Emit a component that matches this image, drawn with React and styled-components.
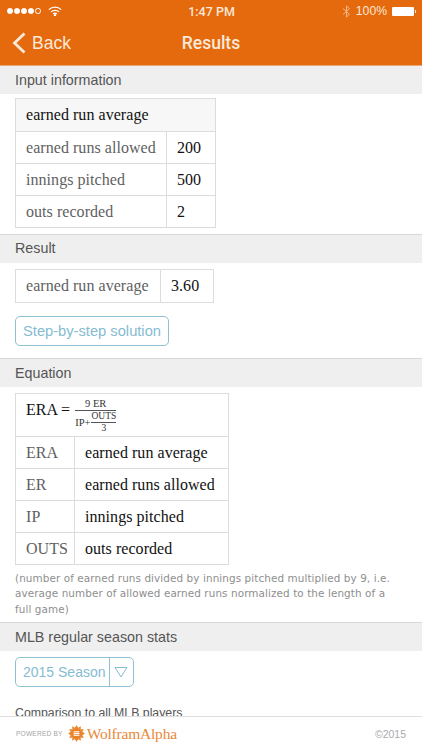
import React from "react";
import styled, { createGlobalStyle } from "styled-components";

const Global = createGlobalStyle`
  html, body { margin: 0; padding: 0; background: #fff; }
  * { box-sizing: border-box; }
`;
const SANS = `"Liberation Sans", Arial, sans-serif`;
const SERIF = `"Liberation Serif", "Times New Roman", serif`;

const Page = styled.div`
  width: 422px; height: 750px; display: flex; flex-direction: column; overflow: hidden;
  font-family: ${SANS}; background: #fff;
`;
const Header = styled.header`
  height: 66px; flex: none; background: #e46a0d; color: #fff; display: flex; flex-direction: column;
  border-bottom: 1px solid #e9a877;
`;
const StatusBar = styled.div`
  height: 20px; display: grid; grid-template-columns: 1fr auto 1fr; align-items: center; padding: 0 6px 0 7px;
  font-size: 12.2px; color: #fbe7d6; margin-top: 1px;
`;
const Clock = styled.div`font-family: Roboto, ${SANS}; font-weight: 500; font-size: 12.5px;`;
const StatusSide = styled.div`
  display: flex; align-items: center; gap: ${p => p.$gap || 0}px; justify-content: ${p => p.$end ? "flex-end" : "flex-start"};
`;
const Dots = styled.div`display: flex; gap: 1.5px; margin-right: 7px;`;
const Dot = styled.span`
  width: 5.5px; height: 5.5px; border-radius: 50%; border: 1px solid #fff; background: ${p => p.$off ? "transparent" : "#fff"};
`;
const Battery = styled.span`
  width: 22px; height: 9px; background: #fff; border-radius: 1px; margin-right: 2px; position: relative;
  &::after { content: ""; position: absolute; right: -2px; top: 3px; width: 1.5px; height: 3px; background: #fbe7d6; }
`;
const NavBar = styled.div`
  flex: 1; position: relative; display: flex; align-items: center; justify-content: center;
`;
const BackLink = styled.div`
  position: absolute; left: 12px; top: 0; bottom: 0; display: flex; align-items: center; gap: 6px; font-size: 17.5px; color: #fbe9da;
`;
const Title = styled.div`font-family: Roboto, ${SANS}; font-size: 17.5px; font-weight: 500; color: #fbe9da;`;
const Main = styled.main`flex: 1; min-height: 0; overflow: hidden;`;
const SectionHead = styled.h2`
  margin: 0; height: ${p => p.$h || 29}px; background: #efefef; border-top: ${p => p.$first ? "none" : "1px solid #d8d8d8"};
  font-size: 14.3px; font-weight: 400; color: #555; padding: ${p => p.$pad ?? 5}px 0 0 15px; line-height: 18px;
`;
const Pod = styled.section`
  padding: ${p => p.$pad || "4px 0 0 15px"}; height: ${p => p.$h}px;
`;
const Table = styled.table`
  border-collapse: collapse; font-family: ${SERIF}; font-size: 16px; width: ${p => p.$w}px; table-layout: fixed;
`;
const Col = styled.col`width: ${p => p.$w}px;`;
const Cell = styled.td`
  border: 1px solid #dcdcdc; height: ${p => p.$h || 32}px; padding: 0 0 0 10px; color: ${p => p.$label ? "#5f5f5f" : "#111"};
  background: ${p => p.$head ? "#f7f7f7" : "#fff"}; letter-spacing: 0.05px; white-space: nowrap;
`;
const FormulaCell = styled.td`
  border: 1px solid #dcdcdc; height: 43px; padding: 0 0 0 10px; background: #fff;
`;
const ButtonRow = styled.div`padding-top: 13px;`;
const Button = styled.div`
  display: inline-flex; align-items: center; height: 30px; border: 1px solid #8fc1d3; border-radius: 5px;
  color: #85bcd1; font-size: 14.7px; padding: 0 7px;
`;
const FormulaRow = styled.div`
  display: flex; align-items: flex-start; gap: 5px; color: #111; font-size: 16px;
`;
const FormulaName = styled.span`line-height: 20px; margin-top: 2px;`;
const Fraction = styled.span`
  display: inline-flex; flex-direction: column; align-items: center; font-size: 10.5px; line-height: 11px; color: #333;
`;
const FractionTop = styled.span`
  display: block; width: 100%; text-align: center; border-bottom: 1px solid #555; padding-bottom: 1px; ${p => p.$small && "font-size: 9.5px; line-height: 9px;"}
`;
const FractionBottom = styled.span`display: inline-flex; align-items: center; gap: 1px; padding-top: 1px; ${p => p.$small && "font-size: 9.5px; line-height: 9px;"}`;
const TableWrap = styled.div`padding-left: 15px;`;
const Note = styled.p`
  margin: 0; padding: 6px 27px 0 15px; font-family: "DejaVu Sans", sans-serif; font-size: 10.4px; line-height: 15.4px; color: #8e8e8e; letter-spacing: 0.1px;
`;
const SelectWrap = styled.div`padding: 6px 0 0 15px;`;
const Select = styled.div`
  display: inline-flex; height: 30px; border: 1px solid #8fc1d3; border-radius: 5px; color: #85bcd1; font-size: 14px; align-items: center;
`;
const SelectLabel = styled.span`padding: 0 3px 0 7px; line-height: 28px;`;
const SelectArrow = styled.span`
  width: 24px; height: 100%; border-left: 1px solid #8fc1d3; display: flex; align-items: center; justify-content: center;
`;
const Sub = styled.div`padding: 18px 0 0 15px; font-size: 12.3px; color: #555; line-height: 16px;`;
const Footer = styled.footer`
  height: 34px; flex: none; background: #fff; border-top: 1px solid #dedede; display: flex; align-items: center; justify-content: space-between;
  padding: 0 16px;
`;
const Brand = styled.div`display: flex; align-items: center;`;
const Powered = styled.span`font-size: 6.6px; color: #a5a5a5; margin-right: 5px; letter-spacing: 0.2px;`;
const Wordmark = styled.span`font-family: ${SERIF}; font-size: 15.5px; color: #e8883a; margin-left: 2px; letter-spacing: -0.2px;`;
const Copy = styled.span`font-size: 10.5px; color: #aaa;`;

function Sun() {
  const rays = Array.from({ length: 12 }, (_, i) => i * 30);
  return (
    <svg width="17" height="17" viewBox="0 0 17 17">
      {rays.map(a => <polygon key={a} points="6.8,3 8.5,0 10.2,3" fill="#e9842a" transform={`rotate(${a} 8.5 8.5)`} />)}
      <circle cx="8.5" cy="8.5" r="5.8" fill="#e9842a" />
      <rect x="5.6" y="6.3" width="5.8" height="1.1" fill="#fff" />
      <rect x="5.6" y="8" width="5.8" height="1.1" fill="#fff" />
      <rect x="5.6" y="9.7" width="5.8" height="1.1" fill="#fff" />
    </svg>
  );
}
function Wifi() {
  return (
    <svg width="14" height="10" viewBox="0 0 14 10" fill="none" stroke="#fff" strokeWidth="1.3">
      <path d="M.8 3.6a9 9 0 0 1 12.4 0" />
      <path d="M3 5.9a5.8 5.8 0 0 1 8 0" />
      <path d="M5.2 8a2.6 2.6 0 0 1 3.6 0" />
      <circle cx="7" cy="9.2" r=".5" fill="#fff" />
    </svg>
  );
}
function BluetoothMark() {
  return (
    <svg width="9" height="13" viewBox="0 0 9 13" fill="none" stroke="#f4b98c" strokeWidth="1">
      <path d="M1 3.5 7.5 9.3 4.5 12V1l3 2.7L1 9.5" />
    </svg>
  );
}
function Chevron() {
  return (
    <svg width="14" height="22" viewBox="0 0 14 22" fill="none" stroke="#fbe9da" strokeWidth="2.8">
      <path d="M12.5 1.5 2.5 11l10 9.5" />
    </svg>
  );
}

function Row({ a, b, h }) {
  return <tr><Cell $label $h={h}>{a}</Cell><Cell $h={h}>{b}</Cell></tr>;
}

export default function App() {
  return (
    <Page>
      <Global />
      <Header>
        <StatusBar>
          <StatusSide>
            <Dots><Dot /><Dot /><Dot /><Dot /><Dot $off /></Dots>
            <Wifi />
          </StatusSide>
          <Clock>1:47 PM</Clock>
          <StatusSide $end $gap={5}>
            <BluetoothMark />
            <span>100%</span>
            <Battery />
          </StatusSide>
        </StatusBar>
        <NavBar>
          <BackLink><Chevron />Back</BackLink>
          <Title>Results</Title>
        </NavBar>
      </Header>
      <Main>
        <SectionHead $first $h={28}>Input information</SectionHead>
        <Pod $h={140}>
          <Table $w={200}>
            <colgroup><Col $w={151} /><Col $w={49} /></colgroup>
            <tbody>
              <tr><Cell $head $h={33} colSpan={2}>earned run average</Cell></tr>
              <Row a="earned runs allowed" b="200" />
              <Row a="innings pitched" b="500" />
              <Row a="outs recorded" b="2" />
            </tbody>
          </Table>
        </Pod>
        <SectionHead $pad={4}>Result</SectionHead>
        <Pod $h={95} $pad="6px 0 0 15px">
          <Table $w={198}>
            <colgroup><Col $w={145} /><Col $w={53} /></colgroup>
            <tbody><Row a="earned run average" b="3.60" h={33} /></tbody>
          </Table>
          <ButtonRow><Button>Step-by-step solution</Button></ButtonRow>
        </Pod>
        <SectionHead>Equation</SectionHead>
        <Pod $h={235} $pad="6px 0 0 0">
          <TableWrap>
            <Table $w={213}>
              <colgroup><Col $w={59} /><Col $w={154} /></colgroup>
              <tbody>
                <tr>
                  <FormulaCell colSpan={2}>
                    <FormulaRow>
                      <FormulaName>ERA =</FormulaName>
                      <Fraction>
                        <FractionTop>9 ER</FractionTop>
                        <FractionBottom>IP+
                          <Fraction>
                            <FractionTop $small>OUTS</FractionTop>
                            <FractionBottom $small>3</FractionBottom>
                          </Fraction>
                        </FractionBottom>
                      </Fraction>
                    </FormulaRow>
                  </FormulaCell>
                </tr>
                <Row a="ERA" b="earned run average" />
                <Row a="ER" b="earned runs allowed" />
                <Row a="IP" b="innings pitched" />
                <Row a="OUTS" b="outs recorded" />
              </tbody>
            </Table>
          </TableWrap>
          <Note>(number of earned runs divided by innings pitched multiplied by 9, i.e. average number of allowed earned runs normalized to the length of a full game)</Note>
        </Pod>
        <SectionHead>MLB regular season stats</SectionHead>
        <SelectWrap>
          <Select>
            <SelectLabel>2015 Season</SelectLabel>
            <SelectArrow>
              <svg width="14" height="12" viewBox="0 0 14 12"><path d="M1 1.5h12L7 11z" fill="none" stroke="#85bcd1" strokeWidth="1" /></svg>
            </SelectArrow>
          </Select>
        </SelectWrap>
        <Sub>Comparison to all MLB players</Sub>
      </Main>
      <Footer>
        <Brand>
          <Powered>POWERED BY</Powered>
          <Sun />
          <Wordmark>WolframAlpha</Wordmark>
        </Brand>
        <Copy>©2015</Copy>
      </Footer>
    </Page>
  );
}
